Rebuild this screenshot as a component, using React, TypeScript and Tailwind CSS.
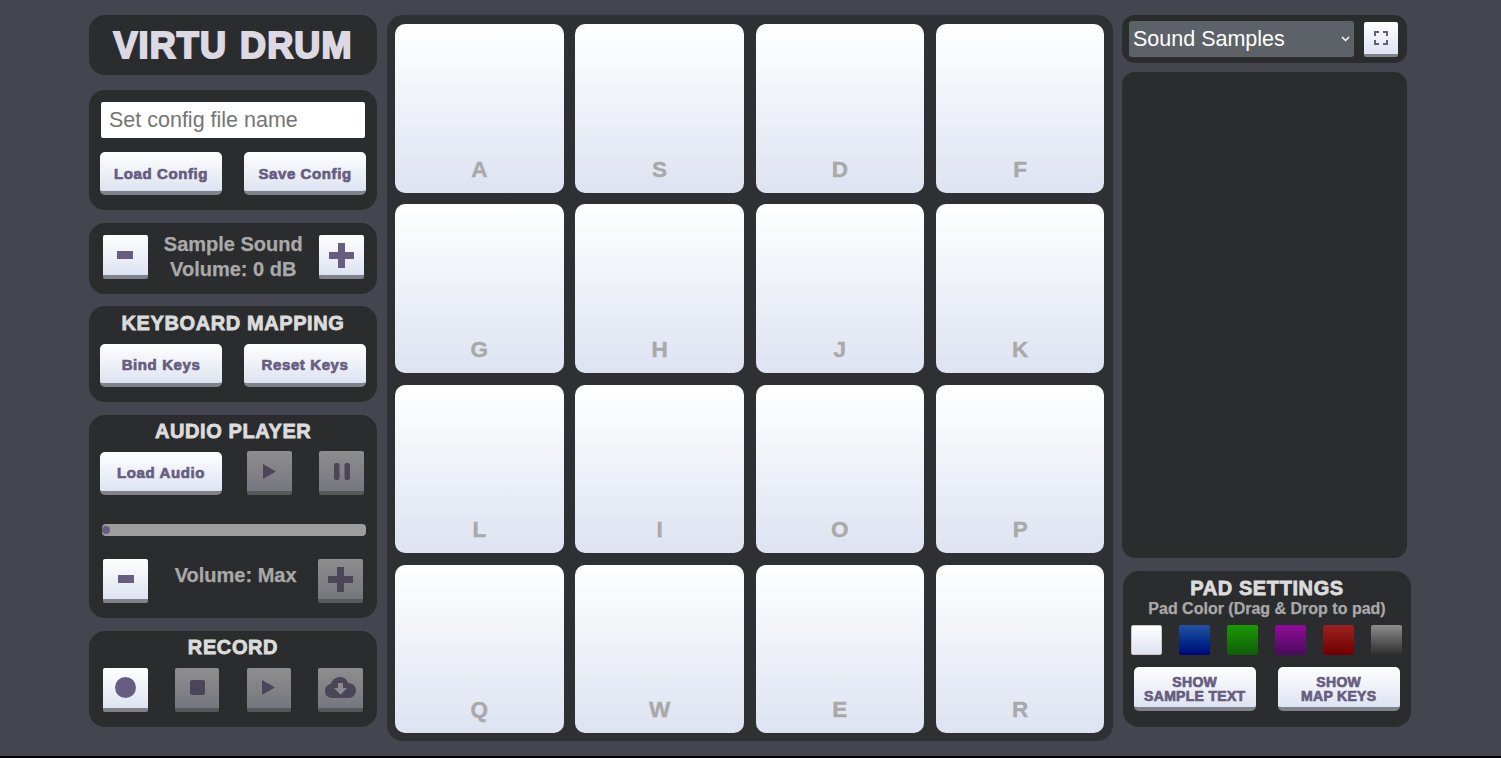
import React from "react";

const font = "font-['Liberation_Sans',Arial,sans-serif]";
const panel = "bg-[#2b2c2e] rounded-[16px]";

function Wide({ children, className = "" }: { children: React.ReactNode; className?: string }) {
  return (
    <button className={`w-[121.500px] h-[43px] rounded-[5px] bg-gradient-to-b from-[#ffffff] to-[#dde3f1] border-b-[4px] border-[#7f8288] text-[#675d80] font-bold text-[15px] leading-[14px] [-webkit-text-stroke:0.7px_#675d80] pt-[4px] flex flex-col items-center justify-center shrink-0 ${className}`}>
      {children}
    </button>
  );
}

function Square({ children, off = false }: { children: React.ReactNode; off?: boolean }) {
  return (
    <button className={`w-[44.500px] h-[44px] rounded-[2px] border-b-[4px] flex items-center justify-center shrink-0 ${off ? "bg-gradient-to-b from-[#8e8e8f] to-[#76767f] border-[#57585b] text-[#4a4557]" : "bg-gradient-to-b from-[#ffffff] to-[#dde3f1] border-[#7f8288] text-[#675d80]"}`}>
      {children}
    </button>
  );
}

const Minus = () => <span className="block w-[16px] h-[8px] bg-current" />;
const Plus = () => (
  <svg width="25" height="25" viewBox="0 0 25 25" fill="currentColor"><path d="M9 0h7v9h9v7h-9v9H9v-9H0V9h9z" /></svg>
);
const Play = () => (
  <svg width="13" height="15" viewBox="0 0 13 15" fill="currentColor"><path d="M0 0l13 7.500L0 15z" /></svg>
);
const Pause = () => (
  <svg width="16" height="17" viewBox="0 0 16 17" fill="currentColor"><rect x="0" width="5.500" height="17" rx="2" /><rect x="10.500" width="5.500" height="17" rx="2" /></svg>
);
const Cloud = () => (
  <svg width="31" height="21" viewBox="0 0 31 21" fill="currentColor">
    <path d="M15 0c4 0 7 2.400 8 6 4.500 0 8 3 8 7.500S27.500 21 23.500 21H7c-4 0-7-3-7-7s2.500-6.500 6-7c1-4 4.500-7 9-7z" />
    <path d="M13 6h5v5h4l-6.500 6.500L9 11h4z" fill="#8a8a8e" />
  </svg>
);

function Heading({ children }: { children: React.ReactNode }) {
  return <div className="text-[#dcdcdc] font-bold text-[20px] leading-[23px] text-center tracking-[0.6px] [-webkit-text-stroke:0.8px_#dcdcdc]">{children}</div>;
}

const label = "text-[#a9a9a9] font-bold text-[20px] [-webkit-text-stroke:0.25px_#a9a9a9]";
const wideText = "tracking-[0.6px]";
const capsText = "!text-[14px] !h-[44px] tracking-[0.3px]";

const keys = ["A", "S", "D", "F", "G", "H", "J", "K", "L", "I", "O", "P", "Q", "W", "E", "R"];
const swatches = [
  "from-[#ffffff] to-[#dde3f1] border border-[#c8c8c8]",
  "from-[#24509f] to-[#000078]",
  "from-[#1b9a04] to-[#0f5c08]",
  "from-[#910a98] to-[#4a0a5c]",
  "from-[#9a2020] to-[#700000]",
  "from-[#8e8e8e] to-[#2f2f2f]",
];

export default function App() {
  return (
    <div className={`${font} h-[758px] w-[1501px] overflow-hidden bg-[#44454f] border-b-[2px] border-black flex items-start pl-[89px] pt-[15px]`}>
      <div className="w-[288px] flex flex-col gap-[12.500px] shrink-0">
        <div className={`${panel} h-[60px] flex items-center justify-center`}>
          <span className="text-[#dcd9e3] font-bold text-[36px] leading-none mt-[2px] [-webkit-text-stroke:2px_#dcd9e3] tracking-[1.100px] [word-spacing:2px]">VIRTU DRUM</span>
        </div>

        <div className={`${panel} h-[120px] pl-[11.300px] pt-[12px] mt-[2.500px] mb-[0.500px]`}>
          <input
            placeholder="Set config file name"
            className="block w-[264px] h-[36px] ml-[0.700px] bg-white rounded-[2px] px-[8px] text-[21.500px] text-[#222] placeholder:text-[#757575] outline-none"
          />
          <div className="flex gap-[22.500px] mt-[14px]">
            <Wide className={wideText}>Load Config</Wide>
            <Wide className={wideText}>Save Config</Wide>
          </div>
        </div>

        <div className={`${panel} h-[71px] flex items-center justify-between pl-[14px] pr-[13.500px]`}>
          <div className="-mt-[3px]"><Square><Minus /></Square></div>
          <div className={`${label} leading-[25.500px] text-center -mt-[3px]`}>
            Sample Sound<br />Volume: 0 dB
          </div>
          <div className="-mt-[3px]"><Square><Plus /></Square></div>
        </div>

        <div className={`${panel} h-[96px] pt-[6px] pl-[11.300px] -mt-[1px]`}>
          <div className="pr-[11.300px]"><Heading>KEYBOARD MAPPING</Heading></div>
          <div className="flex gap-[22.500px] mt-[9px]">
            <Wide className={wideText}>Bind Keys</Wide>
            <Wide className={wideText}>Reset Keys</Wide>
          </div>
        </div>

        <div className={`${panel} h-[203px] pt-[5px] pl-[11.300px] pr-[11px] mt-[1px]`}>
          <Heading>AUDIO PLAYER</Heading>
          <div className="flex items-center mt-[8px]">
            <Wide className={wideText}>Load Audio</Wide>
            <div className="ml-[25.500px]"><Square off><Play /></Square></div>
            <div className="ml-[27.500px]"><Square off><Pause /></Square></div>
          </div>
          <div className="relative mt-[29px] ml-[2px] w-[264px] h-[12px] rounded-[4px] bg-[#9d9d9d]">
            <span className="absolute left-[0px] top-[2px] w-[8px] h-[8px] rounded-full bg-[#675d80]" />
          </div>
          <div className="flex items-start justify-between mt-[23px] pl-[3px] pr-[3px]">
            <Square><Minus /></Square>
            <div className={`${label} leading-[23px] mt-[5px] ml-[5px]`}>Volume: Max</div>
            <Square off><Plus /></Square>
          </div>
        </div>

        <div className={`${panel} h-[96px] pt-[5px] px-[14px]`}>
          <Heading>RECORD</Heading>
          <div className="flex justify-between mt-[9px] w-[260px]">
            <Square><span className="block w-[21px] h-[21px] rounded-full bg-current" /></Square>
            <Square off><span className="block w-[15px] h-[15px] rounded-[2px] bg-current" /></Square>
            <Square off><Play /></Square>
            <Square off><Cloud /></Square>
          </div>
        </div>
      </div>

      <div className="ml-[10px] w-[726px] h-[726px] shrink-0 bg-[#2f3033] rounded-[16px] pl-[8px] pt-[9px] grid grid-cols-[repeat(4,168.500px)] grid-rows-[repeat(4,168.500px)] gap-x-[11.800px] gap-y-[11.800px]">
        {keys.map((k) => (
          <div key={k} className="rounded-[10px] bg-gradient-to-b from-[#ffffff] to-[#dde3f1] flex items-end justify-center pb-[11px]">
            <span className="text-[#a9a9a9] font-bold text-[22.500px] leading-[25px] [-webkit-text-stroke:0.4px_#a9a9a9]">{k}</span>
          </div>
        ))}
      </div>

      <div className="ml-[9px] w-[289px] shrink-0">
        <div className="w-[285px] h-[48px] bg-[#2b2c2e] rounded-[13px] flex items-center pl-[7px]">
          <div className="relative w-[225px] h-[36px] rounded-[3px] bg-[#5c6267] text-white text-[21.500px] leading-[37px] pl-[4px]">
            Sound Samples
            <svg className="absolute right-[4px] top-[14px]" width="9" height="8" viewBox="0 0 9 8" fill="none" stroke="#fff" strokeWidth="1.500"><path d="M1 2l3.500 3.500L8 2" /></svg>
          </div>
          <button className="ml-[9.500px] w-[34.500px] h-[35px] rounded-[2px] bg-gradient-to-b from-[#ffffff] to-[#dde3f1] border-b-[3px] border-[#7f8288] flex items-center justify-center">
            <svg width="14" height="14" viewBox="0 0 14 14" fill="none" stroke="#675d80" strokeWidth="2"><path d="M1 5V1h4M9 1h4v4M13 9v4H9M5 13H1V9" /></svg>
          </button>
        </div>
        <div className="w-[285px] h-[486px] mt-[9px] bg-[#2b2c2e] rounded-[13px]" />
        <div className="ml-[1px] w-[288px] h-[156px] mt-[13px] bg-[#2b2c2e] rounded-[16px] pt-[6px] px-[8px]">
          <Heading>PAD SETTINGS</Heading>
          <div className={`${label} !text-[16px] leading-[19px] text-center -mt-[1px]`}>Pad Color (Drag &amp; Drop to pad)</div>
          <div className="flex justify-between mt-[7px] w-[271px]">
            {swatches.map((s, i) => (
              <div key={i} className={`w-[31px] h-[30px] rounded-[2px] bg-gradient-to-b ${s}`} />
            ))}
          </div>
          <div className="flex gap-[22.500px] mt-[12px] ml-[3px]">
            <Wide className={capsText}>SHOW<br />SAMPLE TEXT</Wide>
            <Wide className={capsText}>SHOW<br />MAP KEYS</Wide>
          </div>
        </div>
      </div>
    </div>
  );
}
